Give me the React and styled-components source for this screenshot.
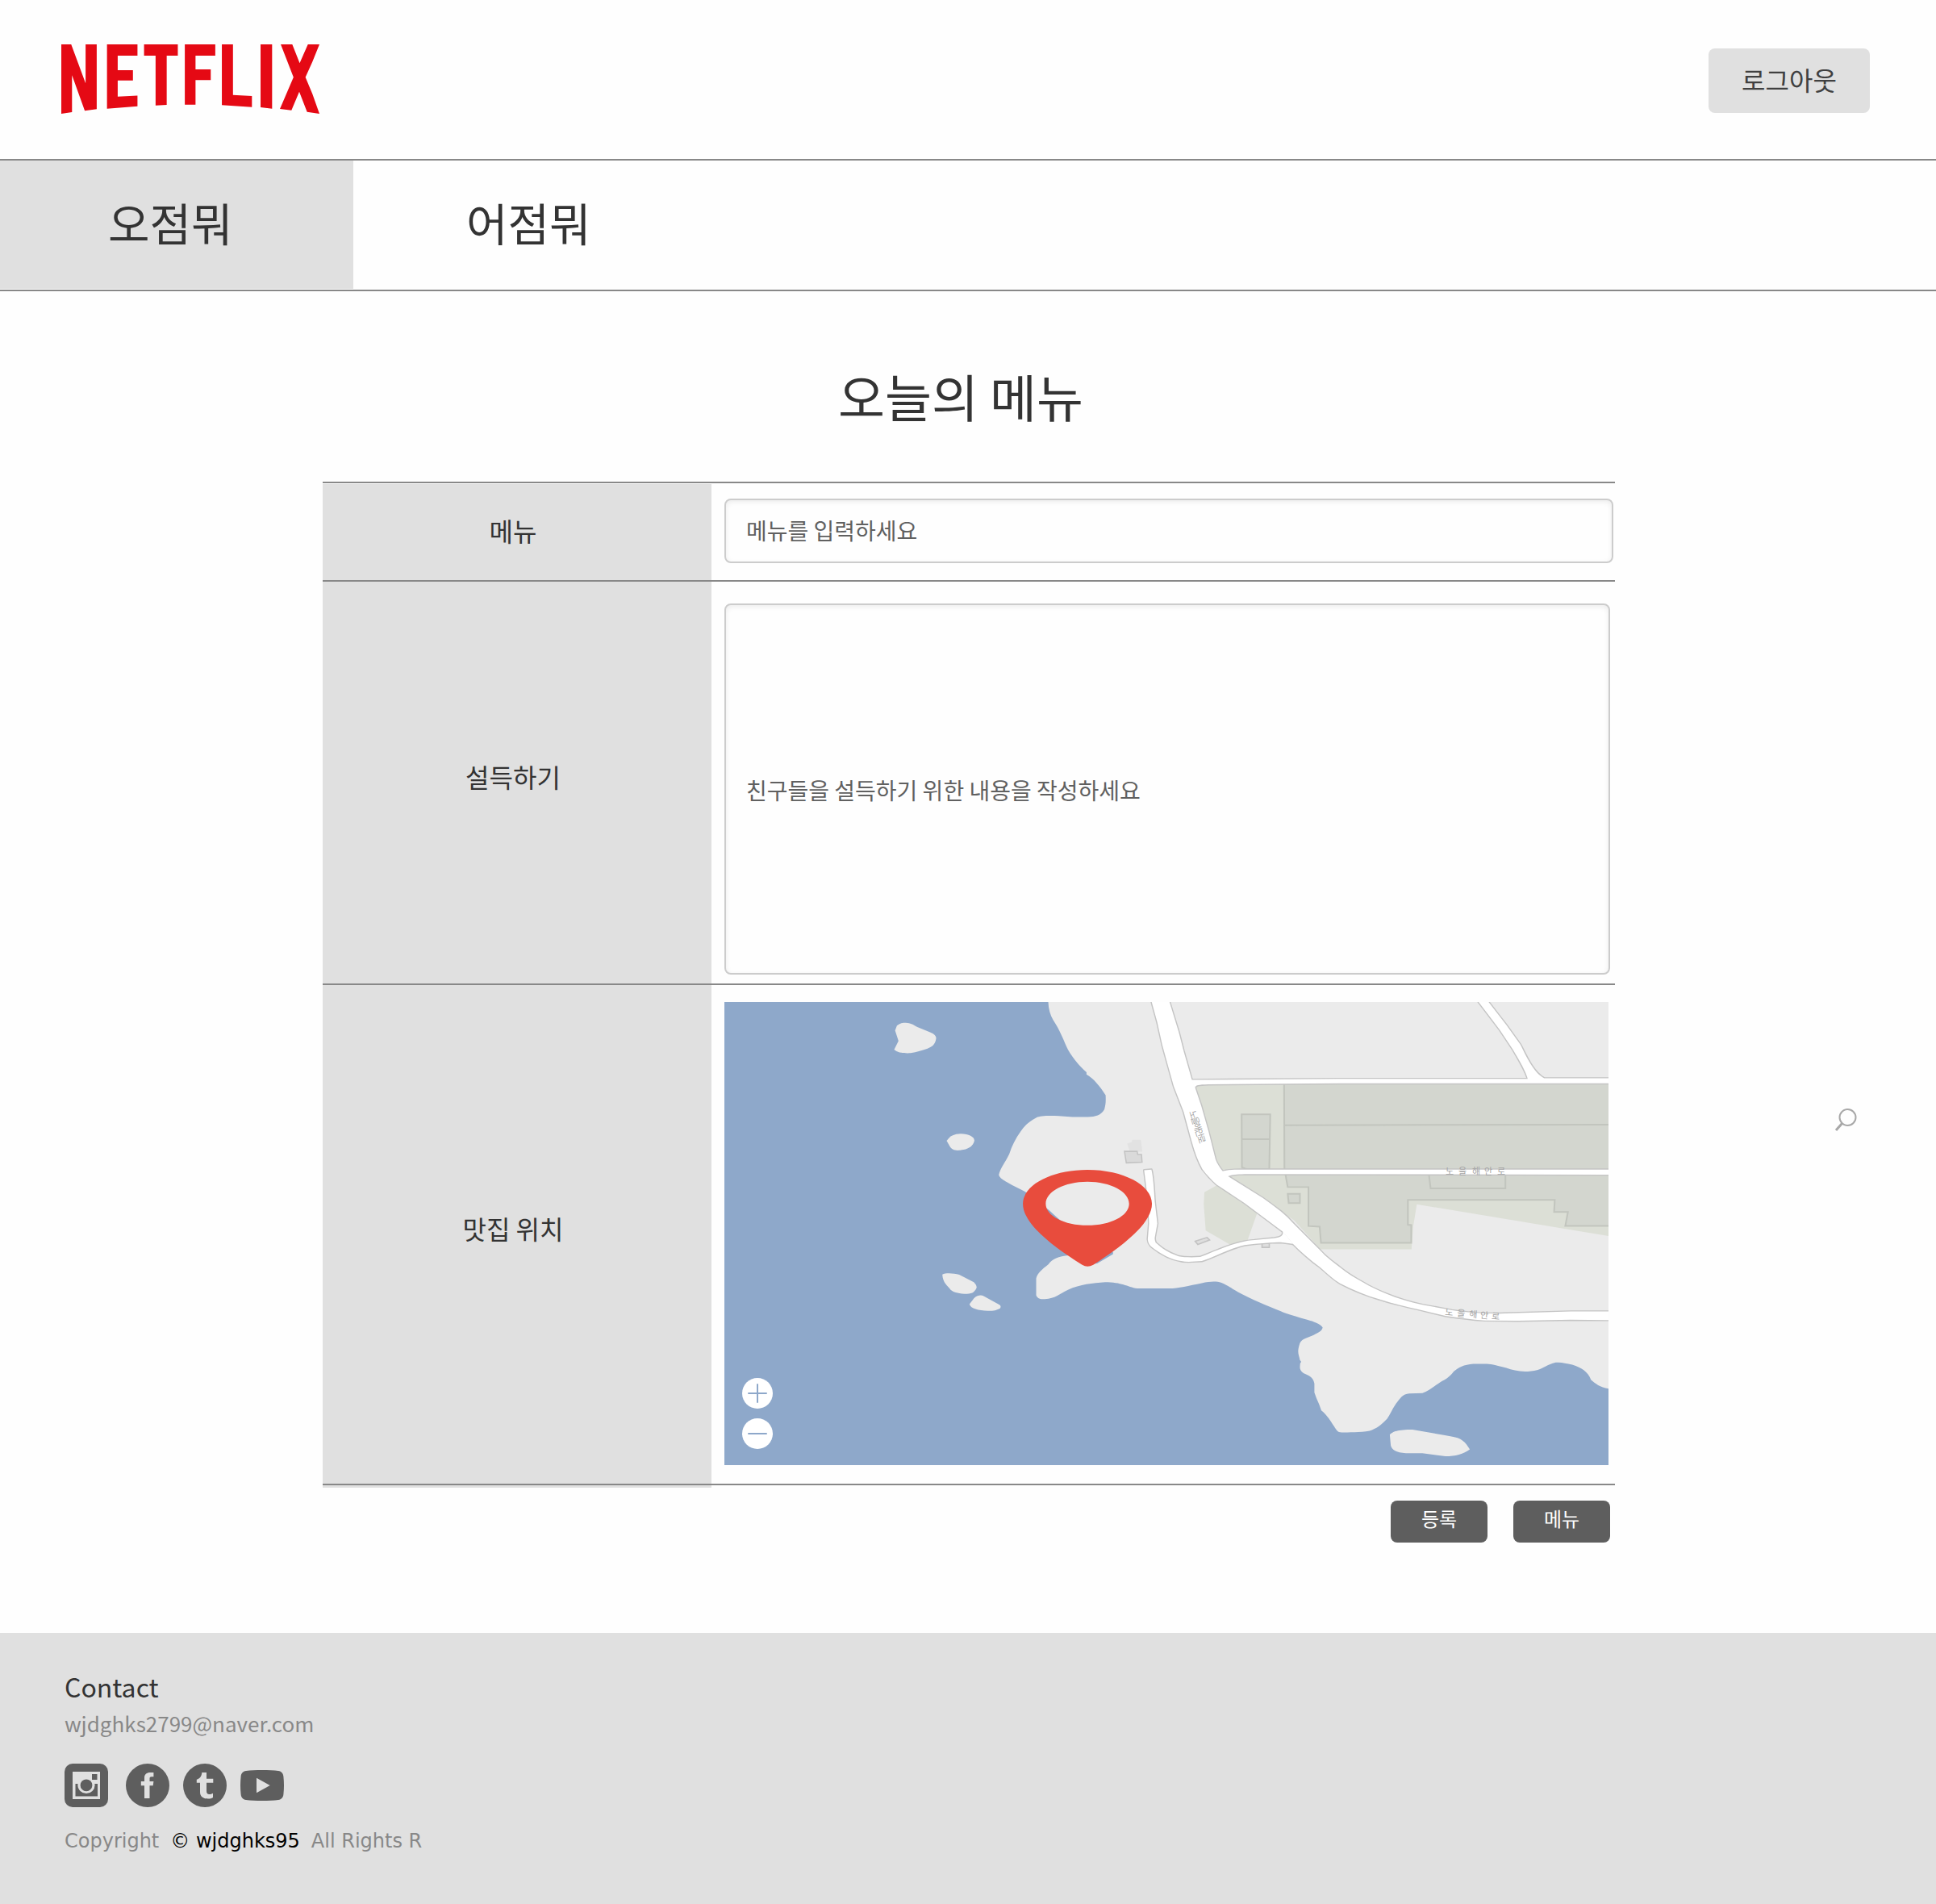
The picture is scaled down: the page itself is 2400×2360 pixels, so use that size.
import React from "react";
import styled, { createGlobalStyle, css } from "styled-components";

const GlobalStyle = createGlobalStyle`
  *, *::before, *::after { box-sizing: border-box; }
  body {
    margin: 0;
    background: #fefefe;
    color: #333;
    font-family: "Noto Sans CJK KR", "Noto Sans", sans-serif;
  }
  button, input, textarea { font-family: inherit; }
`;

const GREY = "#e0e0e0";
const LINE = "#888";
const DARK = "#5e5e5e";

/* ---------- header ---------- */

const Header = styled.header`
  display: flex;
  align-items: flex-start;
  justify-content: space-between;
  padding: 55px 82px 56px 76px;
  border-bottom: 2px solid ${LINE};
`;

const LogoLink = styled.a`
  display: block;
  line-height: 0;
`;

const LogoutButton = styled.button`
  width: 200px;
  height: 80px;
  margin-top: 5px;
  padding: 0 0 4px;
  border: 0;
  border-radius: 8px;
  background: ${GREY};
  color: #404040;
  font-size: 32px;
  line-height: 48px;
`;

const Nav = styled.nav`
  display: flex;
  gap: 6px;
  padding-bottom: 1px;
  border-bottom: 2px solid ${LINE};
`;

const Tab = styled.a`
  display: flex;
  align-items: center;
  width: 438px;
  height: 159px;
  padding: 0 0 8px 134px;
  background: ${(p) => (p.$active ? GREY : "transparent")};
  color: #333;
  font-size: 56px;
  line-height: 80px;
  text-decoration: none;
`;

/* ---------- main ---------- */

const Main = styled.main`
  display: grid;
  grid-template-columns: 400fr 1602fr 398fr;
  padding-bottom: 112px;
`;

const Title = styled.h1`
  grid-column: 2;
  margin: 0;
  padding: 83px 20px 61px 0;
  font-size: 63px;
  font-weight: 400;
  line-height: 92px;
  text-align: center;
`;

const Form = styled.form`
  grid-column: 2;
  min-width: 0;
`;

const Fields = styled.div`
  padding-top: 1px;
  border-top: 2px solid ${LINE};
`;

const Rows = styled.div`
  padding-bottom: 3px;
  background: linear-gradient(to right, ${GREY} 482px, transparent 482px);
`;

const Row = styled.div`
  display: grid;
  grid-template-columns: 482px minmax(0, 1fr);
  border-bottom: 2px solid ${LINE};
`;

const labelStyle = css`
  display: flex;
  align-items: center;
  justify-content: center;
  padding: 0 10px ${(p) => (p.$tall ? "16px" : "6px")} 0;
  font-size: 32px;
  line-height: 48px;
`;

const Label = styled.label`
  ${labelStyle}
`;

const Caption = styled.div`
  ${labelStyle}
`;

const Control = styled.div`
  padding: ${(p) => p.$pad};
`;

const fieldStyle = css`
  display: block;
  width: 100%;
  border: 2px solid #ccc;
  border-radius: 8px;
  background: #fefefe;
  box-shadow: inset 0 2px 6px rgba(0, 0, 0, 0.08);
  color: #333;
  font-size: 28px;
  line-height: 40px;
  outline: none;

  &::placeholder {
    color: #606060;
    opacity: 1;
  }
`;

const TextInput = styled.input`
  ${fieldStyle}
  height: 80px;
  padding: 0 25px 2px;
`;

const TextArea = styled.textarea`
  ${fieldStyle}
  height: 460px;
  padding: 209px 25px 0;
  resize: none;
`;

const Actions = styled.div`
  display: flex;
  justify-content: flex-end;
  gap: 32px;
  padding: 16px 6px 0 0;
`;

const ActionButton = styled.button`
  width: 120px;
  height: 52px;
  padding: 0 0 8px;
  border: 0;
  border-radius: 8px;
  background: ${DARK};
  color: #fff;
  font-size: 24px;
  line-height: 36px;
`;

const Side = styled.aside`
  display: flex;
  align-items: flex-start;
  justify-content: flex-end;
  padding: 776px 98px 0 0;
`;

const SearchButton = styled.button`
  padding: 0;
  border: 0;
  background: none;
  line-height: 0;
`;

/* ---------- map ---------- */

const MapFrame = styled.div`
  position: relative;
  overflow: hidden;
  background: #8ea8ca;
  line-height: 0;
`;

const MapSvg = styled.svg`
  display: block;
  width: 100%;
  height: 574px;
`;

const MapLabel = styled.text`
  fill: #a4a4a4;
  font-size: 11px;
`;

const ZoomControls = styled.div`
  position: absolute;
  left: 22px;
  bottom: 20px;
  display: flex;
  flex-direction: column;
  gap: 12px;
`;

const ZoomButton = styled.button`
  width: 38px;
  height: 38px;
  padding: 0;
  border: 0;
  border-radius: 50%;
  background: #fff;
  line-height: 0;
`;

/* ---------- footer ---------- */

const Footer = styled.footer`
  height: 336px;
  padding: 42px 80px 0;
  background: ${GREY};
`;

const ContactHeading = styled.h2`
  margin: 0;
  font-size: 32px;
  font-weight: 400;
  line-height: 48px;
`;

const Email = styled.a`
  display: block;
  color: #888;
  font-size: 26px;
  line-height: 44px;
  text-decoration: none;
`;

const SocialList = styled.ul`
  display: flex;
  align-items: center;
  gap: 17px;
  margin: 28px 0 24px;
  padding: 0;
  list-style: none;
  line-height: 0;

  li:first-child {
    margin-right: 5px;
  }
`;

const SocialLink = styled.a`
  display: block;
`;

const Copyright = styled.p`
  display: flex;
  gap: 14px;
  margin: 0;
  color: #888;
  font-family: "DejaVu Sans", sans-serif;
  font-size: 24px;
  line-height: 36px;
`;

const Owner = styled.span`
  color: #000;
`;

/* ---------- drawings ---------- */

function Logo() {
  return (
    <svg width="320" height="86" viewBox="149 165 627 259" preserveAspectRatio="none" fill="#e50914" role="img" aria-label="Netflix">
      <path d="M149 165H173L208 310V165H235V407L206 413L175 280V418L149 424Z" />
      <path d="M260 165H334V207H286V261H323V300H286V360L334 356V396L260 405Z" />
      <path d="M350 165H432V207H405V391L378 393V207H350Z" />
      <path d="M449 165H523V207H475V258H512V298H475V390H449Z" />
      <path d="M539 165H566V354L612 358V399L539 392Z" />
      <path d="M633 165H661V405L633 400Z" />
      <path d="M682 165H710L728 235L748 165H776L759 230L742 288L759 350L776 424L746 417L727 342L708 411L680 406L713 288Z" />
    </svg>
  );
}

const WEST = "matrix(0.3827 0 0 0.3954 -18 -22.1)";
const EAST = "matrix(0.4082 0 0 0.3954 502 -22.1)";

const ROADS = [
  "M68 56L85 120L100 190L116 250L135 320L165 400L190 495C198 525 208 555 222 580C235 598 250 614 265 628L350 686L465 775L495 812C520 838 548 864 580 888C600 906 620 926 640 938C680 960 720 976 760 988C800 1002 840 1011 880 1020L960 1040C1000 1046 1040 1052 1080 1054L1180 1055L1340 1052L1470 1053V1026L1340 1026L1140 1032C1090 1034 1030 1030 980 1022L890 1005C850 996 815 985 780 970C755 960 730 948 710 935C685 921 662 906 640 888C620 872 598 856 580 835L500 752C488 738 474 724 460 712C442 698 424 684 405 670L300 602L283 586C274 574 266 562 262 550L240 460L218 380L200 325L190 300L165 210L150 150L122 56Z",
  "M188 300L640 297L1210 297C1205 275 1185 240 1165 205L1125 143L1058 52H1088L1145 128L1188 190C1205 225 1228 278 1260 295H1470V311H640L240 314C210 315 200 316 199 326Z",
  "M281 587C300 582 310 581 340 581H1470V597L350 595C320 596 308 598 298 603Z",
  "M45 583L57 680L60 750L56 800C58 820 70 825 90 840C120 860 150 870 180 870L220 868C260 855 300 830 350 818C390 812 440 809 460 809L497 814L466 775C468 785 464 793 440 796L380 802C320 806 260 838 215 855C190 857 165 856 150 853C115 840 100 828 80 810C76 800 77 795 78 790L85 750L77 680C75 640 72 600 67 581Z",
];

function MapDrawing() {
  return (
    <MapSvg viewBox="0 0 1096 574" preserveAspectRatio="none" aria-hidden="true">
      <g transform={WEST} fill="#ebebeb">
        <path d="M1096 50C1096 75 1102 96 1112 112C1135 146 1145 175 1160 205C1180 238 1198 256 1220 276V283C1245 298 1262 318 1282 348C1283 368 1282 378 1278 392C1268 410 1248 416 1225 416H1175L1130 413C1090 412 1070 413 1058 418C1035 430 1018 444 1008 460C990 484 978 508 970 532C956 560 940 578 936 598C940 610 950 616 1026 653L1088 700C1105 712 1120 728 1135 740L1250 790L1306 840V846L1255 875L1220 880L1163 850C1130 852 1108 862 1097 878C1075 895 1062 905 1057 922V975C1062 988 1075 987 1085 987C1120 985 1130 972 1160 958C1200 940 1240 937 1280 934C1335 934 1350 948 1385 954H1405V50Z" />
        <path d="M606 130C615 122 625 121 635 121C652 122 660 128 672 134L712 150C728 156 733 162 733 170C730 190 720 196 705 202C690 206 670 214 650 216C625 217 607 214 597 205L611 178L600 145Z" />
        <path d="M767 491C780 474 792 470 812 469C840 470 855 478 857 490C852 508 840 514 822 519C795 524 785 520 777 508Z" />
        <path d="M753 910C765 904 790 906 808 911L855 934C862 940 865 948 864 952C856 968 848 971 825 971C800 968 790 966 780 958C770 944 755 938 753 910Z" />
        <path d="M841 1003L856 984C868 974 880 974 887 978L938 1005C943 1008 943 1013 940 1016C925 1024 912 1024 900 1024C870 1022 845 1018 841 1003Z" />
      </g>
      <g transform={EAST}>
        <path fill="#ebebeb" d="M24 50H1470V1268H1456C1430 1264 1415 1252 1402 1240C1392 1215 1375 1203 1345 1193C1325 1188 1310 1184 1295 1186C1270 1192 1255 1206 1240 1209C1200 1220 1170 1212 1145 1203C1110 1193 1095 1190 1080 1190H1045C1015 1192 1000 1202 985 1214C975 1228 965 1236 950 1244C925 1260 910 1275 890 1282L850 1283C830 1285 822 1298 810 1315C795 1338 792 1350 783 1362C765 1382 750 1393 730 1400C700 1405 665 1405 645 1405C632 1405 628 1396 622 1386C610 1368 602 1352 583 1336C575 1310 570 1305 562 1280V1252C558 1230 545 1228 530 1220C515 1210 518 1200 519 1188L522 1184L518 1178C515 1160 508 1155 518 1125C525 1110 545 1108 560 1100C575 1092 585 1088 587 1076C580 1065 560 1058 540 1052C510 1042 480 1035 460 1025C420 1008 370 988 330 965C305 950 295 942 280 936C262 930 245 932 220 937C180 945 150 953 120 954H24Z" />
        <path fill="#ebebeb" d="M791 1412C800 1402 815 1396 860 1396L975 1417C1010 1422 1020 1435 1034 1458C1015 1472 990 1480 960 1480L890 1470H840C810 1468 798 1460 794 1446Z" />
        <path fill="#dcdfd6" d="M200 316L470 310H1470V792L873 690L862 760L857 831H580L500 740L300 600L265 560Z" />
        <path fill="#dcdfd6" d="M228 652L270 628L388 718L358 806L305 816L232 772L226 690Z" />
        <g fill="#d3d6cf" stroke="#c2c5be" strokeWidth="5">
          <path d="M470 308H1480V584H471Z" />
          <path d="M470 442L1480 440" />
          <path d="M341 408H428L425 580H356L342 574Z" />
          <path d="M342 486H428" />
          <path d="M473 590L481 636H544V758L578 760L582 811H856V755L846 754V676H1292L1290 714H1332L1324 758H1480V590Z" />
          <path d="M909 590L915 640H1142V590Z" />
          <path d="M481 657H518V686H484Z" />
        </g>
        <g fill="#dedede" stroke="#c3c3c3" strokeWidth="4">
          <path d="M200 806L236 794L244 802L208 816Z" />
          <path d="M403 812H425V825H403Z" />
        </g>
      </g>
      <g transform={WEST}>
        <path fill="#e2e2e2" d="M1352 500L1367 495L1368 488H1396L1401 525H1360Z" />
        <path fill="#dadada" stroke="#c3c3c3" strokeWidth="4" d="M1343 524H1384L1386 534H1398L1400 558L1349 560Z" />
      </g>
      <g transform={EAST}>
        <g stroke="#c4c4c4" strokeWidth="7" strokeLinejoin="round" fill="none">
          {ROADS.map((d) => (
            <path key={d} d={d} />
          ))}
        </g>
        <g fill="#fff">
          {ROADS.map((d) => (
            <path key={d} d={d} />
          ))}
        </g>
      </g>
      <MapLabel transform="translate(576 136) rotate(72)" x="0 8 16 24 32">노을해안로</MapLabel>
      <MapLabel x="894 910 927 942 958" y="214">노을해안로</MapLabel>
      <MapLabel transform="translate(893 388) rotate(5)" x="0 15 30 44 58">노을해안로</MapLabel>
      <g transform={WEST}>
        <path
          fill="#e84c3d"
          fillRule="evenodd"
          d="M1223 582C1340 582 1432 630 1432 688C1432 750 1340 818 1242 880Q1223 890 1206 880C1105 818 1014 750 1014 688C1014 630 1106 582 1223 582ZM1223 619C1148 619 1088 650 1088 688C1088 726 1148 756 1223 756C1298 756 1358 726 1358 688C1358 650 1298 619 1223 619Z"
        />
      </g>
    </MapSvg>
  );
}

function ZoomGlyph({ plus }) {
  return (
    <svg width="38" height="38" viewBox="0 0 38 38" stroke="#8ea8ca" strokeWidth="2" strokeLinecap="round">
      <path d="M8 19H30" />
      {plus && <path d="M19 8V30" />}
    </svg>
  );
}

const SOCIAL = [
  {
    name: "Instagram",
    height: 54,
    art: (
      <>
        <rect width="54" height="54" rx="10" fill={DARK} />
        <rect x="10" y="10" width="34" height="34" fill={GREY} />
        <rect x="13.5" y="25" width="27.5" height="15.5" fill={DARK} />
        <circle cx="27" cy="26.5" r="10.6" fill={GREY} />
        <circle cx="27" cy="26.8" r="7.4" fill={DARK} />
        <rect x="34" y="13" width="6.5" height="7" fill={DARK} />
      </>
    ),
  },
  {
    name: "Facebook",
    height: 54,
    art: (
      <>
        <circle cx="27" cy="27" r="27" fill={DARK} />
        <path fill={GREY} d="M34.4 11H30.5C25.5 11 23 13.5 23 17.5V22H18.8V27.3H23V43H29.5V27.3H33.7L34.4 22H29.5V18.5C29.5 17 30.2 16.3 31.8 16.3H34.4Z" />
      </>
    ),
  },
  {
    name: "Tumblr",
    height: 54,
    art: (
      <>
        <circle cx="27" cy="27" r="27" fill={DARK} />
        <path fill={GREY} d="M23.3 11H29V18.7H37.3V23.7H29V34C29 36.8 30.2 38 32.4 38C34.2 38 35.6 37.6 37 36.8V42C35.2 43 33.6 43.5 31 43.5C24.6 43.5 21 40.6 21 35.2V23.7H16.8V19.7C20.8 18.6 22.9 15.6 23.3 11Z" />
      </>
    ),
  },
  {
    name: "YouTube",
    height: 38,
    art: (
      <>
        <path fill={DARK} d="M7 1C17 -0.3 37 -0.3 47 1C51 1.6 53 4 53.4 8C54.2 15 54.2 23 53.4 30C53 34 51 36.4 47 37C37 38.3 17 38.3 7 37C3 36.4 1 34 0.6 30C-0.2 23 -0.2 15 0.6 8C1 4 3 1.6 7 1Z" />
        <path fill={GREY} d="M20 9.7L36.7 18.9L20 28.3Z" />
      </>
    ),
  },
];

export default function App() {
  return (
    <>
      <GlobalStyle />
      <Header>
        <LogoLink href="#">
          <Logo />
        </LogoLink>
        <LogoutButton type="button">로그아웃</LogoutButton>
      </Header>
      <Nav>
        <Tab href="#" $active aria-current="page">오점뭐</Tab>
        <Tab href="#">어점뭐</Tab>
      </Nav>

      <Main>
        <Title>오늘의 메뉴</Title>
        <Form onSubmit={(e) => e.preventDefault()}>
          <Fields>
            <Rows>
              <Row>
                <Label htmlFor="menu">메뉴</Label>
                <Control $pad="18px 2px 21px 16px">
                  <TextInput id="menu" type="text" placeholder="메뉴를 입력하세요" />
                </Control>
              </Row>
              <Row>
                <Label htmlFor="pitch" $tall>설득하기</Label>
                <Control $pad="27px 6px 11px 16px">
                  <TextArea id="pitch" placeholder="친구들을 설득하기 위한 내용을 작성하세요" />
                </Control>
              </Row>
              <Row>
                <Caption $tall>맛집 위치</Caption>
                <Control $pad="21px 8px 23px 16px">
                  <MapFrame>
                    <MapDrawing />
                    <ZoomControls>
                      <ZoomButton type="button" aria-label="확대">
                        <ZoomGlyph plus />
                      </ZoomButton>
                      <ZoomButton type="button" aria-label="축소">
                        <ZoomGlyph />
                      </ZoomButton>
                    </ZoomControls>
                  </MapFrame>
                </Control>
              </Row>
            </Rows>
          </Fields>
          <Actions>
            <ActionButton type="submit">등록</ActionButton>
            <ActionButton type="button">메뉴</ActionButton>
          </Actions>
        </Form>
        <Side>
          <SearchButton type="button" aria-label="검색">
            <svg width="28" height="30" viewBox="0 0 28 30" fill="none" stroke="#a8a8a8" strokeWidth="2">
              <circle cx="16.5" cy="12" r="10" />
              <path d="M9.5 19.5L2 28" strokeWidth="3" />
            </svg>
          </SearchButton>
        </Side>
      </Main>

      <Footer>
        <ContactHeading>Contact</ContactHeading>
        <Email href="mailto:wjdghks2799@naver.com">wjdghks2799@naver.com</Email>
        <SocialList>
          {SOCIAL.map((s) => (
            <li key={s.name}>
              <SocialLink href="#" aria-label={s.name}>
                <svg width="54" height={s.height} viewBox={`0 0 54 ${s.height}`}>
                  {s.art}
                </svg>
              </SocialLink>
            </li>
          ))}
        </SocialList>
        <Copyright>
          <span>Copyright</span>
          <Owner>© wjdghks95</Owner>
          <span>All Rights R</span>
        </Copyright>
      </Footer>
    </>
  );
}
